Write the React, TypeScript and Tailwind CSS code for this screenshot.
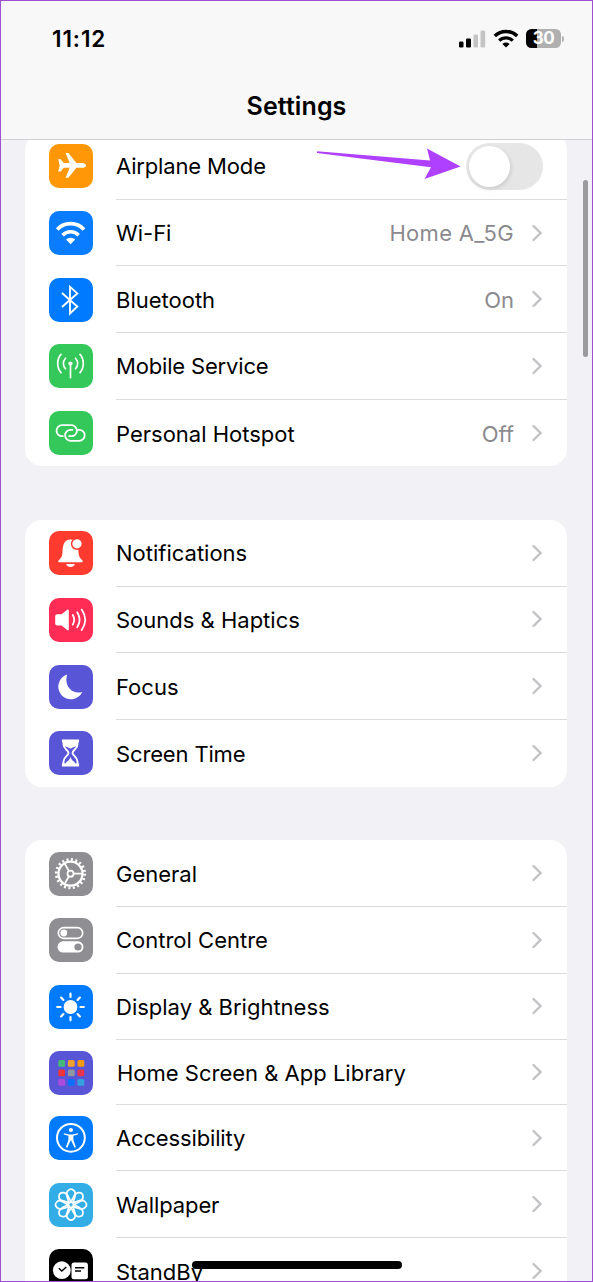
import type { ReactNode } from "react";
import clsx from "clsx";

type Row = {
  label: string;
  value?: string;
  toggle?: boolean;
  tile: string;
  icon: ReactNode;
  height?: string;
  tracking?: string;
};

const wifi = (
  <>
    <path d="M8.2 18.4a18.4 18.4 0 0 1 26.8 0" strokeWidth="3.7" />
    <path d="M13.6 24.2a11 11 0 0 1 16 0" strokeWidth="3.5" />
    <path d="M17 28.6a6.6 6.6 0 0 1 9.2 0L21.6 33.2z" fill="#fff" stroke="none" />
  </>
);

const petals = [0, 45, 90, 135, 180, 225, 270, 315];
const spokes = [0, 120, 240];

const appTiles = [
  ["#45b97c", "#f0a030", "#f59a12"],
  ["#f0353a", "#9298a0", "#e8344e"],
  ["#ad4be0", "#0a70f8", "#34a0e0"],
];

const groups: Row[][] = [
  [
    {
      label: "Airplane Mode",
      toggle: true,
      tile: "bg-[#ff9707]",
      tracking: "tracking-[-0.15px]",
      icon: (
        <path
          d="M37 21.4c0 1.4-2 2.4-4 2.4h-5.6L19.4 33.8h-2.8l4-10h-5.8l-3.2 3.8H9.2l1.5-6.2-1.5-6.2h2.4l3.2 3.8h5.8l-4-10h2.8L27.4 19H33c2 0 4 1 4 2.4z"
          fill="#fff"
          stroke="none"
        />
      ),
    },
    { label: "Wi-Fi", value: "Home A_5G", tile: "bg-[#0a7cff]", icon: wifi },
    {
      label: "Bluetooth",
      value: "On",
      tile: "bg-[#007aff]",
      icon: <path d="M13 15l15.3 13.5-7.3 7V8.8l7.3 6.6L13 29" strokeWidth="1.9" />,
    },
    {
      label: "Mobile Service",
      tile: "bg-[#34c759]",
      tracking: "tracking-[-0.17px]",
      icon: (
        <g strokeWidth="1.7" strokeLinecap="round">
          <circle cx="21.5" cy="19.5" r="2.1" fill="#fff" stroke="none" />
          <path d="M21.5 20v13.6M16.5 14.2c-2.8 3.2-2.8 7.4 0 10.6M26.5 14.2c2.8 3.2 2.8 7.4 0 10.6M12 10.4c-4.4 5-4.4 13.2 0 18.2M31 10.4c4.4 5 4.4 13.2 0 18.2" />
        </g>
      ),
    },
    {
      label: "Personal Hotspot",
      value: "Off",
      tile: "bg-[#34c759]",
      icon: (
        <path
          d="M13.8 25.2H13a5.5 5.5 0 0 1 0-11h9.4a5.5 5.5 0 0 1 0 11h-2.2M29.4 18.8h.8a5.5 5.5 0 0 1 0 11h-8.6a5.5 5.5 0 0 1 0-11h1.8"
          strokeWidth="1.8"
          strokeLinecap="round"
        />
      ),
    },
  ],
  [
    {
      label: "Notifications",
      tile: "bg-[#ff3b30]",
      icon: (
        <>
          <path
            d="M9.2 30.6c0-2.2 3.7-2.8 4.2-8.2.4-6.4.6-13.9 8.1-13.9s7.7 7.5 8.1 13.9c.5 5.4 4.2 6 4.2 8.2 0 .5-.3.7-.8.7H10c-.5 0-.8-.2-.8-.7zM17.2 33h8.6c-.5 1.9-2.1 3-4.3 3s-3.8-1.1-4.3-3z"
            fill="#fff"
            stroke="none"
          />
          <circle cx="28" cy="12.8" r="5.4" fill="#fff" stroke="#ff3b30" strokeWidth="1.5" />
        </>
      ),
    },
    {
      label: "Sounds & Haptics",
      tile: "bg-[#ff2d55]",
      icon: (
        <>
          <path
            d="M8.2 16.2h4.4l5.6-4.5c.8-.6 1.6-.2 1.6.7v19c0 .9-.8 1.3-1.6.7l-5.6-4.6H8.2c-1.2 0-2-.8-2-2v-7.3c0-1.2.8-2 2-2z"
            fill="#fff"
            stroke="none"
          />
          <path
            d="M23.8 17c1.7 3 1.7 6.6 0 9.6M28.2 14.3c3 4.7 3 10.3 0 15M32.7 11.6c4.4 6.4 4.4 14 0 20.4"
            strokeWidth="1.8"
            strokeLinecap="round"
          />
        </>
      ),
    },
    {
      label: "Focus",
      tile: "bg-[#5856d6]",
      icon: (
        <path
          d="M18.2 9.6A12.6 12.6 0 1 0 33.3 27C23 30 14.5 20.5 18.2 9.6z"
          fill="#fff"
          stroke="none"
        />
      ),
    },
    {
      label: "Screen Time",
      tile: "bg-[#5856d6]",
      tracking: "tracking-[-0.15px]",
      icon: (
        <>
          <path
            d="M14.5 10v3.5c0 4.5 5 5.5 5 8.4s-5 4-5 8.5v3.4h14v-3.4c0-4.5-5-5.6-5-8.5s5-3.9 5-8.4V10"
            strokeWidth="1.9"
          />
          <path
            d="M12.9 8.4h17.2v2.8H12.9zM12.9 32.6h17.2v2.8H12.9zM15 11h13v3c-.3 2.5-3 1.2-6.5 3.8-3.5-2.6-6.2-1.3-6.5-3.8zM16.5 33c.4-3 4.3-2.8 5-7.5.7 4.7 4.6 4.5 5 7.5z"
            fill="#fff"
            stroke="none"
          />
        </>
      ),
    },
  ],
  [
    {
      label: "General",
      tile: "bg-[#8e8e93]",
      icon: (
        <>
          <circle cx="21.5" cy="21.7" r="12" strokeWidth="2.3" />
          <circle cx="21.5" cy="21.7" r="14.2" strokeWidth="2.8" strokeDasharray="2 2.46" />
          <circle cx="21.5" cy="21.7" r="3" strokeWidth="1.8" />
          {spokes.map((a) => (
            <path key={a} d="M24.5 21.7H33" strokeWidth="1.8" transform={`rotate(${a} 21.5 21.7)`} />
          ))}
        </>
      ),
    },
    {
      label: "Control Centre",
      tile: "bg-[#8e8e93]",
      icon: (
        <>
          <rect x="9.3" y="9.7" width="24.4" height="10.6" rx="5.3" strokeWidth="1.7" />
          <circle cx="14.8" cy="15" r="3.4" fill="#fff" stroke="none" />
          <rect x="8.5" y="23.3" width="26" height="11.3" rx="5.6" fill="#fff" stroke="none" />
          <circle cx="29" cy="29" r="3.6" fill="#8e8e93" stroke="none" />
        </>
      ),
    },
    {
      label: "Display & Brightness",
      tile: "bg-[#007aff]",
      icon: (
        <>
          <circle cx="21.5" cy="22" r="6.9" fill="#fff" stroke="none" />
          {petals.map((a) => (
            <path
              key={a}
              d="M21.5 12V8.7"
              strokeWidth="2.2"
              strokeLinecap="round"
              transform={`rotate(${a} 21.5 22)`}
            />
          ))}
        </>
      ),
    },
    {
      label: "Home Screen & App Library",
      tile: "bg-[#5856d6]",
      height: "h-[64.5px]",
      tracking: "pl-px",
      icon: (
        <>
          {appTiles.map((line, y) =>
            line.map((color, x) => (
              <rect
                key={color}
                x={9.3 + x * 9.6}
                y={9 + y * 9.5}
                width="6.8"
                height="6.8"
                rx="1.5"
                fill={color}
                stroke="none"
              />
            ))
          )}
        </>
      ),
    },
    {
      label: "Accessibility",
      tile: "bg-[#007aff]",
      tracking: "tracking-[-0.15px]",
      icon: (
        <>
          <circle cx="21.9" cy="21.8" r="13.9" strokeWidth="2" />
          <circle cx="21.9" cy="14" r="2.1" fill="#fff" stroke="none" />
          <path
            d="M14.8 17.2l5.3 1.2h3.6l5.3-1.2v1.2l-4.6 1.4v4l2.5 7.5-1.4.5-3.3-7.3h-.6l-3.3 7.3-1.4-.5 2.5-7.5v-4l-4.600-1.400z"
            fill="#fff"
            stroke="none"
          />
        </>
      ),
    },
    {
      label: "Wallpaper",
      tile: "bg-[#32ade6]",
      tracking: "tracking-[-0.1px]",
      icon: (
        <>
          {petals.map((a) => (
            <path
              key={a}
              d="M22 18.9l-3.1-6a4 4 0 1 1 6.200 0z"
              strokeWidth="1.7"
              transform={`rotate(${a} 22 21.7)`}
            />
          ))}
          <circle cx="22" cy="21.7" r="2.8" strokeWidth="1.5" />
        </>
      ),
    },
    {
      label: "StandBy",
      tile: "bg-black",
      icon: (
        <>
          <circle cx="12.8" cy="21.2" r="8.9" fill="#fff" stroke="none" />
          <path d="M9.8 19.3l3 2.7 4.5-4" stroke="#000" strokeWidth="1.4" />
          <rect x="22.5" y="13.5" width="16.4" height="16.8" rx="2.5" fill="#fff" stroke="none" />
          <path d="M26 18.7h9.3M26 22h6" stroke="#000" strokeWidth="1.4" />
        </>
      ),
    },
  ],
];

function Chevron() {
  return (
    <svg className="ml-[18px] h-[18px] w-[10px] shrink-0" viewBox="0 0 10 18" fill="none">
      <path d="M1.5 2l7 7-7 7" stroke="#c2c2c5" strokeWidth="2.3" strokeLinecap="round" />
    </svg>
  );
}

function SettingsRow({ row, last }: { row: Row; last: boolean }) {
  return (
    <div className={clsx("flex items-center pl-[24px]", row.height ?? "h-[66.7px]")}>
      <div className={clsx("h-[44px] w-[44px] shrink-0 overflow-hidden rounded-[10px]", row.tile)}>
        <svg viewBox="0 0 44 44" className="h-full w-full" fill="none" stroke="#fff">
          {row.icon}
        </svg>
      </div>
      <div
        className={clsx(
          "ml-[23px] flex h-full flex-1 items-center pr-[25px]",
          !last && "border-b border-[#dcdcdf]"
        )}
      >
        <span className={clsx("flex-1 pt-[2px] whitespace-nowrap text-black", row.tracking)}>
          {row.label}
        </span>
        {row.value && (
          <span
            className={clsx(
              "pt-[2px] text-[#8a8a8e]",
              row.value.length > 3 && "tracking-[0.3px]"
            )}
          >
            {row.value}
          </span>
        )}
        {row.toggle ? (
          <div className="mt-[2px] -mr-px flex h-[47px] w-[77px] items-center rounded-full bg-[#e6e6e7] px-[3px]">
            <div className="h-[41px] w-[41px] rounded-full bg-white shadow-[1px_2px_4px_rgba(0,0,0,0.12)]" />
          </div>
        ) : (
          <Chevron />
        )}
      </div>
    </div>
  );
}

function StatusIcons() {
  return (
    <div className="flex items-center">
      <svg className="h-[18px] w-[27px]" viewBox="0 0 27 18">
        <rect x="0" y="11.5" width="4.5" height="6" rx="1.3" />
        <rect x="7" y="8.5" width="5" height="9" rx="1.3" />
        <rect x="14.5" y="4.5" width="4.5" height="13" rx="1.3" fill="#c4c4c4" />
        <rect x="21.5" y="0.5" width="4.7" height="17" rx="1.3" fill="#c4c4c4" />
      </svg>
      <svg className="ml-[7px] h-[19px] w-[26px]" viewBox="0 0 26 19" fill="none" stroke="#000">
        <path d="M1.800 6.900a16.300 16.300 0 0 1 22.400 0" strokeWidth="3.400" />
        <path d="M6.200 11.600a9.800 9.800 0 0 1 13.600 0" strokeWidth="3.200" />
        <path d="M9.400 14.900a5.200 5.200 0 0 1 7.200 0L13 18.500z" fill="#000" stroke="none" />
      </svg>
      <div className="ml-[7px] flex h-[19px] w-[35px] items-center justify-center rounded-[5.5px] bg-linear-to-r from-black from-30% to-[#b0b0b0] to-30% text-[17px] font-bold tracking-[-0.5px] text-white">
        30
      </div>
      <div className="ml-px h-[6px] w-[2px] rounded-r-full bg-[#b5b5b5]" />
    </div>
  );
}

export default function App() {
  return (
    <div className="relative flex h-[1282px] w-[593px] flex-col overflow-hidden border border-[#a04fd0] bg-[#f2f1f6] font-['Inter','Liberation_Sans',sans-serif] text-[22px]">
      <header className="z-10 flex h-[139px] shrink-0 flex-col border-b border-[#cfcfd1] bg-[#f8f8f8] text-black">
        <div className="flex h-[75px] items-center justify-between pr-[28px] pl-[51px]">
          <span className="pt-px text-[22.5px] font-semibold tracking-[0.9px]">11:12</span>
          <StatusIcons />
        </div>
        <h1 className="mt-[13px] text-center text-[25px] leading-[34px] font-semibold tracking-[0.1px]">
          Settings
        </h1>
      </header>

      <main className="-mt-[7px] flex flex-col gap-[53.5px] pr-[25px] pl-[24px]">
        {groups.map((rows) => (
          <section key={rows[0].label} className="shrink-0 rounded-[17px] bg-white">
            {rows.map((row, i) => (
              <SettingsRow key={row.label} row={row} last={i === rows.length - 1} />
            ))}
          </section>
        ))}
      </main>

      {/* pointer towards the airplane switch */}
      <svg className="absolute top-[144px] left-[315px] h-[40px] w-[148px]" viewBox="0 0 148 40">
        <path d="M1 6.3L114 15.5 111 3.5l33.5 18L108.5 34l6.5-11.7L1 8z" fill="#b040ff" />
      </svg>

      <div className="absolute top-[179px] right-[4.5px] h-[177px] w-[4.5px] rounded-full bg-[#9b9b9d]" />
      <div className="absolute bottom-[12px] left-[191px] h-[8px] w-[210px] rounded-full bg-black" />
    </div>
  );
}
